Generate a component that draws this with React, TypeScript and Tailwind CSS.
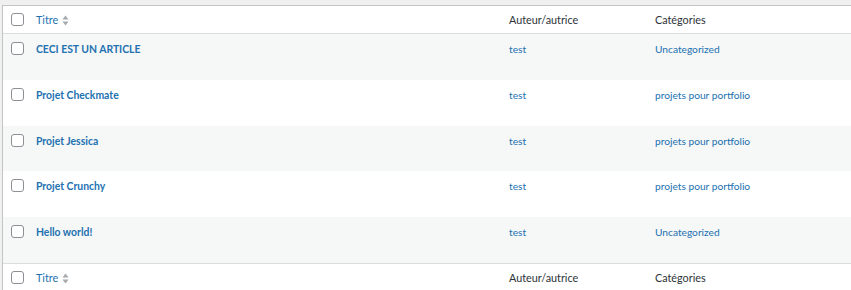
import type { ReactNode } from 'react';

const rows = [
  { title: 'CECI EST UN ARTICLE', author: 'test', cat: 'Uncategorized', h: 'h-[46px]' },
  { title: 'Projet Checkmate', author: 'test', cat: 'projets pour portfolio', h: 'h-[46px]' },
  { title: 'Projet Jessica', author: 'test', cat: 'projets pour portfolio', h: 'h-[45px]' },
  { title: 'Projet Crunchy', author: 'test', cat: 'projets pour portfolio', h: 'h-[46px]' },
  { title: 'Hello world!', author: 'test', cat: 'Uncategorized', h: 'h-[46px]' },
];

const Checkbox = () => (
  <span className="block w-[13px] h-[13px] rounded-[3px] border border-[#8c8f94] bg-white" />
);

const SortIcon = () => (
  <svg width="7" height="11" viewBox="0 0 7 11" className="ml-[4px] mt-[1px]">
    <path d="M3.5 0.5 L6.5 4.5 H0.5 Z" fill="#a7aaad" />
    <path d="M3.5 10.5 L6.5 6.5 H0.5 Z" fill="#a7aaad" />
  </svg>
);

const HeadRow = ({ className }: { className: string }) => (
  <div className={`flex items-center h-[28px] bg-white text-[10.8px] ${className}`}>
    <div className="w-[33px] pl-[8px] flex items-center">
      <Checkbox />
    </div>
    <div className="w-[473px] flex items-center text-[#2271b1]">
      Titre
      <SortIcon />
    </div>
    <div className="w-[146px] text-[#2c3338]">Auteur/autrice</div>
    <div className="flex-1 text-[#2c3338]">Catégories</div>
  </div>
);

const Cell = ({ className, children }: { className: string; children: ReactNode }) => (
  <div className={`${className} pt-[6px]`}>{children}</div>
);

export default function App() {
  return (
    <div
      className="w-[851px] h-[290px] overflow-hidden bg-[#f0f0f1] pl-[2px] pt-[5px] text-[10.2px] leading-[18px]"
      style={{ fontFamily: 'Lato, "Open Sans", sans-serif' }}
    >
      <div className="w-[870px] border-l border-t border-[#c3c4c7] bg-white">
        <HeadRow className="border-b border-[#dcdcde]" />
        {rows.map((r, i) => (
          <div key={r.title} className={`flex ${r.h} ${i % 2 === 0 ? 'bg-[#f6f7f7]' : 'bg-white'}`}>
            <div className="w-[33px] pl-[8px] pt-[8px]">
              <Checkbox />
            </div>
            <Cell className="w-[473px]">
              <span className="text-[#2271b1] font-bold text-[10.4px]">{r.title}</span>
            </Cell>
            <Cell className="w-[146px]">
              <span className="text-[#2271b1]">{r.author}</span>
            </Cell>
            <Cell className="flex-1">
              <span className="text-[#2271b1]">{r.cat}</span>
            </Cell>
          </div>
        ))}
        <HeadRow className="border-t border-[#dcdcde]" />
      </div>
    </div>
  );
}
